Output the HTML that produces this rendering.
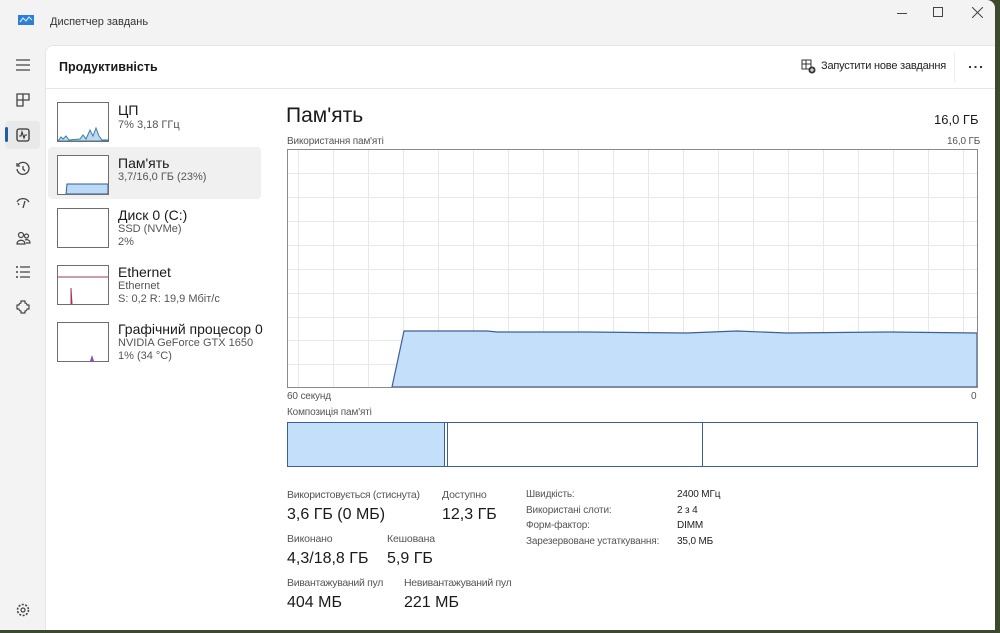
<!DOCTYPE html>
<html><head><meta charset="utf-8"><style>
*{margin:0;padding:0;box-sizing:border-box}
body{width:1000px;height:633px;overflow:hidden;background:#3a4a2a;font-family:"Liberation Sans",sans-serif;color:#1a1a1a;position:relative}
.win{position:absolute;left:0;top:0;width:995px;height:630px;background:#f3f3f3;border-radius:0 8px 0 0}
.panel{position:absolute;left:45px;top:45px;width:950px;height:585px;background:#fff;border-left:1px solid #e5e5e5;border-top:1px solid #e5e5e5;border-top-left-radius:8px}
.abs{position:absolute;white-space:nowrap}
.ic{position:absolute;left:14px;width:18px;height:18px}
.thumb{position:absolute;left:57px;width:52px;height:40px;border:1px solid #6e6e6e;background:#fff}
.t1{font-size:13px;color:#1a1a1a}
.t2{font-size:11px;color:#555}
.lbl{font-size:10px;color:#555;letter-spacing:-0.15px}
.big{font-size:16px;color:#1a1a1a}
</style></head><body>
<div class="win">
<svg class="abs" style="left:18px;top:14px" width="16" height="12"><rect x="0" y="1" width="16" height="10" fill="#2b7fd4"/><path d="M2 8 L5 4 L8 7 L11 3 L14 6" stroke="#cfe6ff" fill="none" stroke-width="1.2"/></svg>
<div class="abs" style="left:50px;top:16px;font-size:11px;color:#333">Диспетчер завдань</div>
<div class="abs" style="left:897px;top:13px;width:10px;height:1px;background:#444"></div>
<div class="abs" style="left:933px;top:7px;width:10px;height:10px;border:1px solid #444"></div>
<svg class="abs" style="left:972px;top:7px" width="11" height="11"><path d="M0 0L11 11M11 0L0 11" stroke="#444" stroke-width="1"/></svg>

<svg class="ic" style="top:56px" viewBox="0 0 18 18"><path d="M2 4H16M2 9H16M2 14H16" stroke="#444" stroke-width="1.3"/></svg>
<svg class="ic" style="top:91px" viewBox="0 0 18 18"><path d="M3 3H9V9H3ZM9 3H15V9H9M3 9V15H9V9" stroke="#444" fill="none" stroke-width="1.3"/></svg>
<div class="abs" style="left:5px;top:121px;width:35px;height:28px;background:#e9e9e9;border-radius:4px"></div>
<div class="abs" style="left:5px;top:127px;width:3px;height:15px;background:#1f5fa8;border-radius:2px"></div>
<svg class="ic" style="top:126px" viewBox="0 0 18 18"><rect x="3" y="3" width="12" height="12" rx="2" stroke="#333" fill="none" stroke-width="1.3"/><path d="M5 10L7 10L8 6L10 12L11 9L13 9" stroke="#333" fill="none" stroke-width="1.1"/></svg>
<svg class="ic" style="top:160px" viewBox="0 0 18 18"><path d="M4 5A6 6 0 1 1 3 9M3 3V6H6M9 6V9L11 11" stroke="#444" fill="none" stroke-width="1.3"/></svg>
<svg class="ic" style="top:194px" viewBox="0 0 18 18"><path d="M3 8C5 4 12 3 15 8M9 14L11 7M5 11L4 9" stroke="#444" fill="none" stroke-width="1.3"/></svg>
<svg class="ic" style="top:229px" viewBox="0 0 18 18"><circle cx="7" cy="6" r="2.5" stroke="#444" fill="none" stroke-width="1.2"/><circle cx="12.5" cy="7" r="2" stroke="#444" fill="none" stroke-width="1.2"/><path d="M3 15C3 10 11 10 11 15ZM11 11C13 10 16 11 16 14H12" stroke="#444" fill="none" stroke-width="1.2"/></svg>
<svg class="ic" style="top:263px" viewBox="0 0 18 18"><path d="M6 4H16M6 9H16M6 14H16" stroke="#444" stroke-width="1.3"/><circle cx="3" cy="4" r="1" fill="#444"/><circle cx="3" cy="9" r="1" fill="#444"/><circle cx="3" cy="14" r="1" fill="#444"/></svg>
<svg class="ic" style="top:298px" viewBox="0 0 18 18"><path d="M7 3H11V5A2 2 0 0 1 13 7H15V11H13A2 2 0 0 1 11 13V15H7V13A2 2 0 0 1 5 11H3V7H5A2 2 0 0 1 7 5Z" stroke="#444" fill="none" stroke-width="1.2" stroke-linejoin="round"/></svg>
<svg class="ic" style="top:601px" viewBox="0 0 18 18"><circle cx="9" cy="9" r="2" stroke="#444" fill="none" stroke-width="1.2"/><circle cx="9" cy="9" r="5.5" stroke="#444" fill="none" stroke-width="1.6" stroke-dasharray="2 1.5"/></svg>
</div>

<div class="panel"></div>
<div class="abs" style="left:59px;top:60px;font-size:12.5px;font-weight:bold">Продуктивність</div>
<svg class="abs" style="left:801px;top:59px" width="15" height="15"><rect x="1" y="1" width="9" height="9" stroke="#333" fill="none"/><path d="M1 5H10M5 1V10" stroke="#333"/><circle cx="11" cy="11" r="3.5" fill="#333"/><path d="M11 9V13M9 11H13" stroke="#fff"/></svg>
<div class="abs" style="left:821px;top:60px;font-size:11px;color:#222;letter-spacing:-0.2px">Запустити нове завдання</div>
<div class="abs" style="left:954px;top:52px;width:1px;height:30px;background:#eee"></div>
<div class="abs" style="left:969px;top:66px;width:13px;height:2px;background:repeating-linear-gradient(90deg,#333 0 2px,transparent 2px 5.5px)"></div>
<div class="abs" style="left:46px;top:88px;width:949px;height:1px;background:#e8e8e8"></div>

<div class="abs" style="left:48px;top:147px;width:213px;height:52px;background:#f0f0f0;border-radius:4px"></div>
<div class="thumb" style="top:102px"><svg width="50" height="38"><path d="M0 38L3 34L5 36L8 33L11 37L22 36L25 32L28 36L32 27L35 33L38 25L41 33L44 37L50 37L50 38Z" fill="#bcd9ee" stroke="#3a7ea8" stroke-width="1"/></svg></div>
<div class="abs t1" style="left:118px;top:102px;font-size:14px">ЦП</div>
<div class="abs t2" style="left:118px;top:119px">7% 3,18 ГГц</div>
<div class="thumb" style="top:155px"><svg width="50" height="38"><path d="M8 38L9 28H50V38Z" fill="#bcd9f5" stroke="#2e5b9a" stroke-width="1"/></svg></div>
<div class="abs t1" style="left:118px;top:155px;font-size:14px">Пам'ять</div>
<div class="abs t2" style="left:118px;top:171px">3,7/16,0 ГБ (23%)</div>
<div class="thumb" style="top:208px"></div>
<div class="abs t1" style="left:118px;top:207px;font-size:14px">Диск 0 (C:)</div>
<div class="abs t2" style="left:118px;top:223px">SSD (NVMe)</div>
<div class="abs t2" style="left:118px;top:236px">2%</div>
<div class="thumb" style="top:265px"><svg width="50" height="38"><path d="M0 11H50" stroke="#a0385a"/><path d="M13 38V22L14 38" stroke="#a0385a" fill="#a0385a"/></svg></div>
<div class="abs t1" style="left:118px;top:264px;font-size:14px">Ethernet</div>
<div class="abs t2" style="left:118px;top:280px">Ethernet</div>
<div class="abs t2" style="left:118px;top:293px">S: 0,2 R: 19,9 Мбіт/с</div>
<div class="thumb" style="top:322px"><svg width="50" height="38"><path d="M32 38L34 32L36 38Z" fill="#8a4ac0"/></svg></div>
<div class="abs t1" style="left:118px;top:321px;font-size:14px">Графічний процесор 0</div>
<div class="abs t2" style="left:118px;top:337px">NVIDIA GeForce GTX 1650</div>
<div class="abs t2" style="left:118px;top:350px">1% (34 °C)</div>

<div class="abs" style="left:286px;top:104px;font-size:21px">Пам'ять</div>
<div class="abs" style="left:934px;top:112px;font-size:13px">16,0 ГБ</div>
<div class="abs lbl" style="left:287px;top:136px">Використання пам'яті</div>
<div class="abs lbl" style="left:947px;top:136px">16,0 ГБ</div>
<svg class="abs" style="left:287px;top:149px" width="691" height="239">
<g stroke="#e8e8e8" stroke-width="1">
<path d="M11.5 0V239M46.5 0V239M81.5 0V239M116.5 0V239M151.5 0V239M186.5 0V239M221.5 0V239M256.5 0V239M291.5 0V239M326.5 0V239M361.5 0V239M396.5 0V239M431.5 0V239M466.5 0V239M501.5 0V239M536.5 0V239M571.5 0V239M606.5 0V239M641.5 0V239M676.5 0V239"/>
<path d="M0 24.5H691M0 48.5H691M0 72.5H691M0 96.5H691M0 120.5H691M0 144.5H691M0 168.5H691M0 191.5H691M0 215.5H691"/>
</g>
<path d="M105 238L117 182L200 182L210 183L300 183L400 184L450 182L500 184L600 183L690 184V238Z" fill="#c4dff9" stroke="#3d5f98" stroke-width="1.2"/>
<rect x="0.5" y="0.5" width="690" height="238" fill="none" stroke="#8a8a8a"/>
</svg>
<div class="abs lbl" style="left:287px;top:391px">60 секунд</div>
<div class="abs lbl" style="left:971px;top:391px">0</div>
<div class="abs lbl" style="left:287px;top:407px">Композиція пам'яті</div>
<div class="abs" style="left:287px;top:422px;width:691px;height:45px;border:1px solid #3d5f98"></div>
<div class="abs" style="left:288px;top:423px;width:157px;height:43px;background:#c4dff9;border-right:1px solid #3d5f98"></div>
<div class="abs" style="left:447px;top:423px;width:1px;height:43px;background:#3d5f98"></div>
<div class="abs" style="left:702px;top:423px;width:1px;height:43px;background:#3d5f98"></div>

<div class="abs lbl" style="left:287px;top:489px;font-size:10.5px;letter-spacing:-0.3px">Використовується (стиснута)</div>
<div class="abs lbl" style="left:442px;top:489px;font-size:10.5px">Доступно</div>
<div class="abs big" style="left:287px;top:506px">3,6 ГБ (0 МБ)</div>
<div class="abs big" style="left:442px;top:506px">12,3 ГБ</div>
<div class="abs lbl" style="left:287px;top:533px;font-size:10.5px">Виконано</div>
<div class="abs lbl" style="left:387px;top:533px;font-size:10.5px">Кешована</div>
<div class="abs big" style="left:287px;top:550px">4,3/18,8 ГБ</div>
<div class="abs big" style="left:387px;top:550px">5,9 ГБ</div>
<div class="abs lbl" style="left:287px;top:577px;font-size:10.5px;letter-spacing:-0.3px">Вивантажуваний пул</div>
<div class="abs lbl" style="left:404px;top:577px;font-size:10.5px;letter-spacing:-0.3px">Невивантажуваний пул</div>
<div class="abs big" style="left:287px;top:594px">404 МБ</div>
<div class="abs big" style="left:404px;top:594px">221 МБ</div>

<div class="abs lbl" style="left:526px;top:489px">Швидкість:</div>
<div class="abs lbl" style="left:526px;top:505px">Використані слоти:</div>
<div class="abs lbl" style="left:526px;top:520px">Форм-фактор:</div>
<div class="abs lbl" style="left:526px;top:536px">Зарезервоване устаткування:</div>
<div class="abs lbl" style="left:677px;top:489px;color:#222">2400 МГц</div>
<div class="abs lbl" style="left:677px;top:505px;color:#222">2 з 4</div>
<div class="abs lbl" style="left:677px;top:520px;color:#222">DIMM</div>
<div class="abs lbl" style="left:677px;top:536px;color:#222">35,0 МБ</div>
</body></html>
